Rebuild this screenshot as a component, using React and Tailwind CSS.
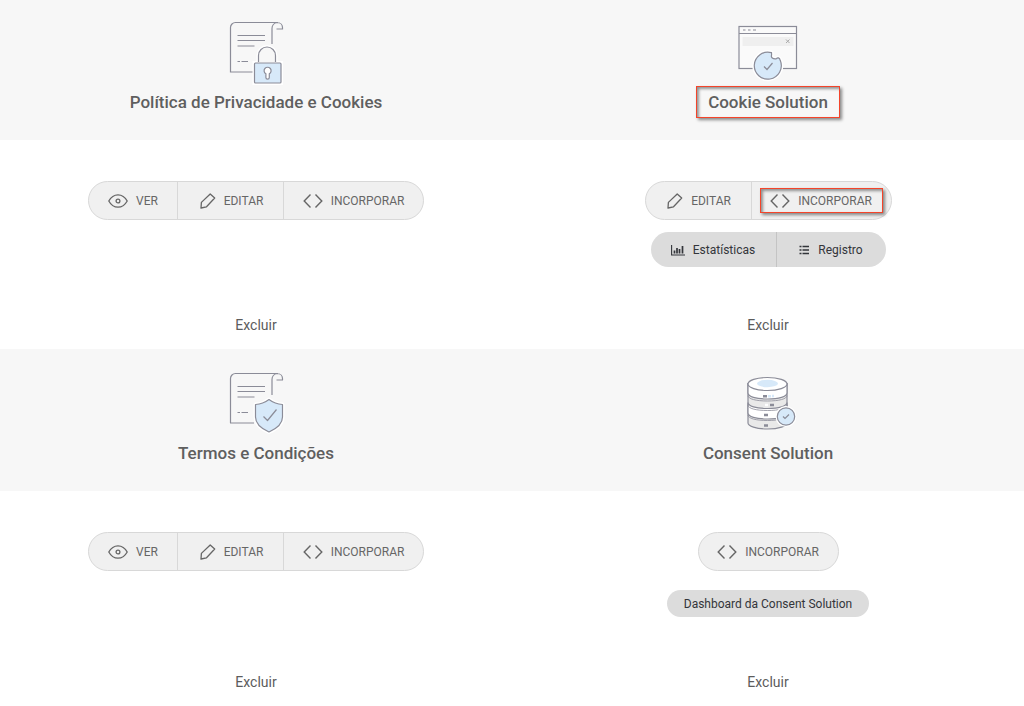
import React from "react";

const STROKE = "#8b8c98";
const BLUE = "#d7e9f9";

function Scroll() {
  return (
    <>
      <path d="M27 52H3.500V7.500a5 5 0 0 1 5-5H51M45 24V8.500a6 6 0 0 1 5-6c3.500 0 5.500 2.500 5.500 5v1.500H49.500" />
      <path d="M10.500 15.500H38M10.500 20.500H38M10.500 26H27.500M10.500 41.500h2.500M14.500 41.500H21" />
    </>
  );
}

function PrivacyIcon() {
  return (
    <svg width="58" height="66" viewBox="0 0 58 66" fill="none" stroke={STROKE} strokeWidth="1.200" aria-hidden="true">
      <Scroll />
      <path d="M31.500 42v-6.500a8.500 8.500 0 0 1 17 0V42M27.500 43h26.500v20h-26.500z" stroke="#fff" strokeWidth="4" />
      <path d="M31.500 42v-6.500a8.500 8.500 0 0 1 17 0V42" fill="#f7f7f7" />
      <rect x="27.500" y="43" width="26.500" height="20" rx="1" fill={BLUE} />
      <path d="M38.900 53.800a3.500 3.500 0 1 1 3.400 0v3.700a1.700 1.700 0 0 1-3.400 0z" fill="#fff" />
    </svg>
  );
}

function TermsIcon() {
  return (
    <svg width="58" height="66" viewBox="0 0 58 66" fill="none" stroke={STROKE} strokeWidth="1.200" strokeLinejoin="round" aria-hidden="true">
      <Scroll />
      <path d="M42 28.500q6 4.500 13.500 5V46q0 9-13.500 15Q28.500 55 28.500 46V33.500Q36 33 42 28.500z" stroke="#fff" strokeWidth="4" />
      <path d="M42 28.500q6 4.500 13.500 5V46q0 9-13.500 15Q28.500 55 28.500 46V33.500Q36 33 42 28.500z" fill={BLUE} />
      <path d="m36.500 45.500 4 4L49.500 38.500" />
    </svg>
  );
}

function CookieIcon() {
  const cookie = "M33.500 32.700A13.500 13.500 0 1 0 42.300 40.600C41.600 37.400 39.600 37.300 38.200 38.800 34.900 39.200 32.600 37.400 33.600 35z";
  return (
    <svg width="60" height="66" viewBox="0 0 60 66" fill="none" stroke={STROKE} strokeWidth="1.200" aria-hidden="true">
      <rect x="1" y="6.500" width="57.500" height="42" fill="#fafafa" />
      <path d="M1 13.500h57.500" />
      <path d="M5 10h2.500M10 10h2.500M15 10h3" />
      <path d="M4.500 17h51v9h-51z" fill="#efefef" stroke="none" />
      <path d="m48 19.500 3.500 3.500m0-3.500L48 23" stroke="#aaa" strokeWidth="1" />
      <path d={cookie} stroke="#fff" strokeWidth="4" />
      <path d={cookie} fill={BLUE} />
      <path d="m26 46.500 3 3 5.500-6.500" />
    </svg>
  );
}

function DatabaseIcon() {
  return (
    <svg width="58" height="66" viewBox="-8 0 58 66" fill="none" stroke={STROKE} strokeWidth="1.200" aria-hidden="true">
      <path d="M1 12.500V52c0 3 8 6 19.500 6S40 55 40 52V12.500z" fill="#e9e9e9" />
      <path d="M1 31.500c0 3.500 8 6 19.500 6S40 35 40 31.500V42c0 3.500-8 6-19.500 6S1 45.500 1 42z" fill="#fff" />
      <path d="M1 12.500V22c0 3.500 8 6 19.500 6S40 25.500 40 22v-9.500z" fill="#fff" />
      <path d="M1 24.500c0 3.500 8 5.500 19.500 5.500S40 28 40 24.500M1 34c0 3.500 8 5.500 19.500 5.500S40 37.500 40 34M1 44c0 3.500 8 5.500 19.500 5.500S40 47.500 40 44" strokeWidth=".8" />
      <ellipse cx="20.500" cy="13" rx="19.500" ry="6.500" fill="#fff" />
      <ellipse cx="20.500" cy="12.500" rx="10.500" ry="3.700" fill={BLUE} stroke="none" />
      <path d="M16 25.200h4M23 34h4M17 44h4M17 54.500h4" strokeWidth="2.400" />
      <path d="M21 25.200h3M25 25h2" stroke={BLUE} strokeWidth="2.400" />
      <path d="M18 34h3" stroke="#fff" strokeWidth="2.400" />
      <circle cx="39" cy="45.500" r="10.500" fill="#fff" stroke="none" />
      <circle cx="39" cy="45.500" r="8.700" fill={BLUE} />
      <path d="m36 45.500 2 2 4-4" />
    </svg>
  );
}

function EyeIcon() {
  return (
    <svg width="20" height="16" viewBox="0 0 20 16" fill="none" stroke="#666" strokeWidth="1.300" aria-hidden="true">
      <path d="M.800 8C3 4 6 1.800 10 1.800S17 4 19.200 8C17 12 14 14.200 10 14.200S3 12 .800 8z" />
      <circle cx="10" cy="8" r="1.900" />
    </svg>
  );
}

function PencilIcon() {
  return (
    <svg width="18" height="18" viewBox="0 0 18 18" fill="none" stroke="#666" strokeWidth="1.300" strokeLinejoin="round" aria-hidden="true">
      <path d="M12.200 2 16.700 6 8.500 14.800 3 16l.400-5.600z" />
    </svg>
  );
}

function CodeIcon() {
  return (
    <svg width="20" height="16" viewBox="0 0 20 16" fill="none" stroke="#666" strokeWidth="1.400" aria-hidden="true">
      <path d="M7.500 1.500 1.200 8l6.300 6.500M12.500 1.500 18.800 8l-6.300 6.500" />
    </svg>
  );
}

function ChartIcon() {
  return (
    <svg width="14" height="12" viewBox="0 0 14 12" fill="none" stroke="#33353a" aria-hidden="true">
      <path d="M.600 1v10H14" strokeWidth="1.100" />
      <path d="M3.500 9.500v-3M6 9.500V4M8.500 9.500V5M11.500 9.500V2" strokeWidth="1.700" />
    </svg>
  );
}

function ListIcon() {
  return (
    <svg width="11" height="10" viewBox="0 0 11 10" fill="none" stroke="#33353a" strokeWidth="1.500" aria-hidden="true">
      <path d="M.5 1.500h2M3.500 1.500H10M.5 5h2M3.500 5H10M.5 8.500h2M3.500 8.500H10" />
    </svg>
  );
}

function Highlight({ className }) {
  return (
    <span
      className={`pointer-events-none absolute border border-[#f4442a] shadow-[2px_2px_3px_rgba(0,0,0,0.45),inset_2px_2px_3px_rgba(0,0,0,0.4)] ${className}`}
    />
  );
}

const ACTIONS = {
  ver: { label: "VER", Icon: EyeIcon, size: "w-[89px] gap-2" },
  editar: { label: "EDITAR", Icon: PencilIcon, size: "w-[106px] gap-2" },
  incorporar: { label: "INCORPORAR", Icon: CodeIcon, size: "w-[139px] gap-2" },
};

function Actions({ items, highlight }) {
  return (
    <div className="flex h-[39px] divide-x divide-[#d8d8d8] rounded-full border border-[#d8d8d8] bg-[#f0f0f0]">
      {items.map((key) => {
        const { label, Icon, size } = ACTIONS[key];
        return (
          <button
            key={key}
            type="button"
            className={`relative flex items-center justify-center text-[12px] text-[#666] ${size}`}
          >
            <Icon />
            {label}
            {highlight === key && <Highlight className="inset-x-2 inset-y-1.5" />}
          </button>
        );
      })}
    </div>
  );
}

function Card({ icon, title, marked, headerPadding = "pt-5 pb-6", children }) {
  return (
    <section className="flex flex-col">
      <header className={`flex flex-col items-center bg-[#f7f7f7] ${headerPadding}`}>
        {icon}
        <h2 className="relative mt-0.5 px-3 text-[17px] leading-7 font-medium text-[#5f5f5f]">
          {title}
          {marked && <Highlight className="inset-x-0 -inset-y-0.5" />}
        </h2>
      </header>
      <div className="flex min-h-[209px] flex-1 flex-col items-center pt-[41px] pb-3.5">
        {children}
        <button type="button" className="mt-auto text-[14px] leading-5 text-[#5c5c5c]">
          Excluir
        </button>
      </div>
    </section>
  );
}

export default function App() {
  return (
    <main className="grid min-h-screen grid-cols-2 grid-rows-[auto_1fr] bg-white font-['Roboto',sans-serif]">
      <Card icon={<PrivacyIcon />} title="Política de Privacidade e Cookies">
        <Actions items={["ver", "editar", "incorporar"]} />
      </Card>
      <Card icon={<CookieIcon />} title="Cookie Solution" marked>
        <Actions items={["editar", "incorporar"]} highlight="incorporar" />
        <div className="mt-3 flex h-[35px] divide-x divide-[#c4c4c4] rounded-full bg-[#dcdcdc] text-[12px] text-[#33353a]">
          <button type="button" className="flex w-[126px] items-center justify-center gap-2">
            <ChartIcon />
            Estatísticas
          </button>
          <button type="button" className="flex w-[109px] items-center justify-center gap-2">
            <ListIcon />
            Registro
          </button>
        </div>
      </Card>
      <Card icon={<TermsIcon />} title="Termos e Condições" headerPadding="pt-[22px] pb-6">
        <Actions items={["ver", "editar", "incorporar"]} />
      </Card>
      <Card icon={<DatabaseIcon />} title="Consent Solution" headerPadding="pt-[22px] pb-6">
        <Actions items={["incorporar"]} />
        <button type="button" className="mt-[19px] h-[27px] rounded-full bg-[#dcdcdc] px-[17px] text-[12px] text-[#33353a]">
          Dashboard da Consent Solution
        </button>
      </Card>
    </main>
  );
}
